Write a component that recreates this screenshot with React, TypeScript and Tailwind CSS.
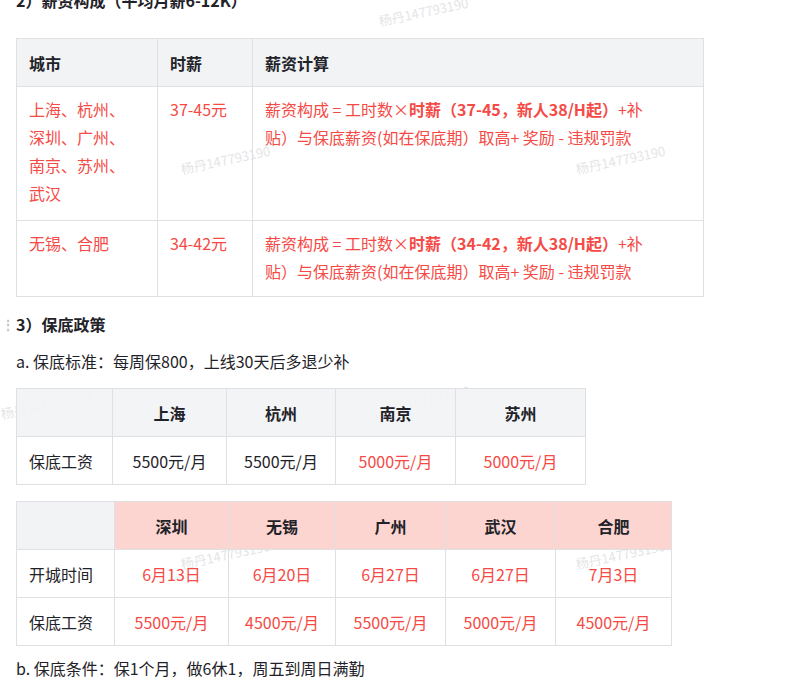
import React from "react";

const F = { fontFamily: '"Noto Sans CJK SC", "Noto Sans", sans-serif' };
const R = "text-[#f54a45]";
const bd = "border border-[#dee0e3]";

function Formula({ a }: { a: string }) {
  return (
    <span className="whitespace-nowrap">
      薪资构成 = 工时数×<b className="font-bold">时薪（{a}，新人38/H起）</b>+补<br />
      贴）与保底薪资(如在保底期）取高+ 奖励 - 违规罚款
    </span>
  );
}

const WM = ({ x, y }: { x: number; y: number }) => (
  <div className="absolute text-[13px] text-[#e4e5e7] -rotate-12 pointer-events-none" style={{ left: x, top: y }}>杨丹147793190</div>
);

export default function App() {
  const cities2 = ["上海", "杭州", "南京", "苏州"];
  const vals2 = ["5500元/月", "5500元/月", "5000元/月", "5000元/月"];
  const w2 = [114, 109, 120, 130];
  const c3 = ["深圳", "无锡", "广州", "武汉", "合肥"];
  const d3 = ["6月13日", "6月20日", "6月27日", "6月27日", "7月3日"];
  const v3 = ["5500元/月", "4500元/月", "5500元/月", "5000元/月", "4500元/月"];
  const w3 = [114, 107, 110, 110, 116];
  return (
    <div className="relative w-[786px] h-[688px] overflow-hidden bg-white text-[16px] text-[#1f2329]" style={F}>
      <WM x={180} y={150} /><WM x={575} y={150} /><WM x={378} y={2} /><WM x={0} y={395} /><WM x={380} y={390} /><WM x={180} y={545} /><WM x={575} y={545} />
      <div className="relative mt-[-16px] ml-[16px] h-[32px] leading-[32px] font-bold">2）薪资构成（平均月薪6-12K）</div>
      <table className="relative ml-[16px] mt-[22px] border-collapse w-[688px] leading-[28px]">
        <tbody>
          <tr className="bg-[#f2f3f5] font-bold h-[48px]">
            <td className={`${bd} w-[141px] px-3`}>城市</td>
            <td className={`${bd} w-[95px] px-3`}>时薪</td>
            <td className={`${bd} px-3`}>薪资计算</td>
          </tr>
          <tr className={`${R} align-top h-[134px]`}>
            <td className={`${bd} px-3 py-[8px]`}>上海、杭州、<br />深圳、广州、<br />南京、苏州、<br />武汉</td>
            <td className={`${bd} px-3 py-[8px]`}>37-45元</td>
            <td className={`${bd} px-3 py-[8px]`}><Formula a="37-45" /></td>
          </tr>
          <tr className={`${R} align-top h-[76px]`}>
            <td className={`${bd} px-3 py-[8px]`}>无锡、合肥</td>
            <td className={`${bd} px-3 py-[8px]`}>34-42元</td>
            <td className={`${bd} px-3 py-[8px]`}><Formula a="34-42" /></td>
          </tr>
        </tbody>
      </table>
      <div className="relative ml-[16px] mt-[12px] h-[30px] leading-[30px] font-bold">
        <span className="absolute left-[-14px] top-0 text-[#bbbfc4] text-[12px]">⋮</span>
        3）保底政策
      </div>
      <div className="relative ml-[16px] mt-[8px] h-[28px] leading-[28px]">a. 保底标准：每周保800，上线30天后多退少补</div>
      <table className="relative ml-[16px] mt-[13px] border-collapse text-center">
        <tbody>
          <tr className="bg-[#f2f3f5]/90 font-bold h-[48px]">
            <td className={`${bd} w-[96px]`}></td>
            {cities2.map((c, i) => <td key={c} className={bd} style={{ width: w2[i] }}>{c}</td>)}
          </tr>
          <tr className="h-[48px]">
            <td className={`${bd} text-left px-3`}>保底工资</td>
            {vals2.map((v, i) => <td key={i} className={`${bd} ${i > 1 ? R : ""}`}>{v}</td>)}
          </tr>
        </tbody>
      </table>
      <table className="relative ml-[16px] mt-[16px] border-collapse text-center">
        <tbody>
          <tr className="font-bold h-[48px]">
            <td className={`${bd} w-[98px] bg-[#f2f3f5]`}></td>
            {c3.map((c, i) => <td key={c} className={`${bd} bg-[#fdd5d0]`} style={{ width: w3[i] }}>{c}</td>)}
          </tr>
          <tr className="h-[48px]">
            <td className={`${bd} text-left px-3`}>开城时间</td>
            {d3.map((v, i) => <td key={i} className={`${bd} ${R}`}>{v}</td>)}
          </tr>
          <tr className="h-[48px]">
            <td className={`${bd} text-left px-3`}>保底工资</td>
            {v3.map((v, i) => <td key={i} className={`${bd} ${R}`}>{v}</td>)}
          </tr>
        </tbody>
      </table>
      <div className="relative ml-[16px] mt-[8px] h-[28px] leading-[28px]">b. 保底条件：保1个月，做6休1，周五到周日满勤</div>
    </div>
  );
}
